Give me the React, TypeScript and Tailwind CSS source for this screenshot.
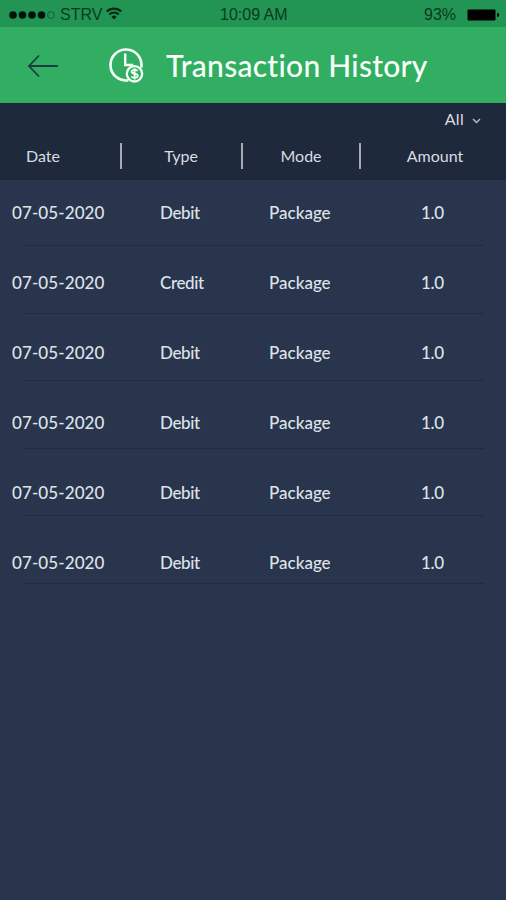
import type { ReactNode } from "react";

interface Transaction {
  date: string;
  type: string;
  mode: string;
  amount: string;
}

const transactions: Transaction[] = [
  { date: "07-05-2020", type: "Debit", mode: "Package", amount: "1.0" },
  { date: "07-05-2020", type: "Credit", mode: "Package", amount: "1.0" },
  { date: "07-05-2020", type: "Debit", mode: "Package", amount: "1.0" },
  { date: "07-05-2020", type: "Debit", mode: "Package", amount: "1.0" },
  { date: "07-05-2020", type: "Debit", mode: "Package", amount: "1.0" },
  { date: "07-05-2020", type: "Debit", mode: "Package", amount: "1.0" },
];

function StatusBar() {
  return (
    <div className="flex h-[27px] items-center bg-[#229453] pt-[2px] font-['Liberation_Sans',sans-serif] text-[16px] text-[#0b3a20]">
      <div className="flex w-[220px] items-center pl-[9px]">
        <svg width="47" height="10" viewBox="0 0 47 10" fill="#02140a">
          <circle cx="4" cy="5" r="3.8" />
          <circle cx="13.5" cy="5" r="3.8" />
          <circle cx="23" cy="5" r="3.8" />
          <circle cx="32.5" cy="5" r="3.8" />
          <circle cx="42" cy="5" r="3.4" fill="none" stroke="#0f6435" />
        </svg>
        <span className="ml-[4px] w-[43px]">STRV</span>
        <svg className="-mt-[2px] ml-[3px]" width="16" height="13" viewBox="0 0 16 13" fill="none" stroke="#052714" strokeWidth="2.1">
          <path d="M0.8 4.6a10.3 10.3 0 0 1 14.4 0" />
          <path d="M3.3 7.4a6.8 6.8 0 0 1 9.4 0" />
          <path d="M8 12.4 5.4 9.8a3.8 3.8 0 0 1 5.2 0z" fill="#052714" stroke="none" />
        </svg>
      </div>
      <span className="w-[204px] whitespace-nowrap pt-px">10:09 AM</span>
      <span className="w-[43px]">93%</span>
      <svg width="34" height="12" viewBox="0 0 34 12" fill="#000">
        <rect x="0.5" y="0.5" width="28" height="11" rx="1" />
        <path d="M30 4c1.4.2 2.2 1 2.2 2s-.8 1.8-2.2 2z" />
      </svg>
    </div>
  );
}

function HistoryIcon() {
  return (
    <svg className="ml-[50px]" width="36" height="38" viewBox="0 0 36 38" fill="none" stroke="#f4fff6">
      <path d="M19.5 34.300A15.500 15.500 0 1 1 32.300 21.500" strokeWidth="2.6" />
      <path d="M16.2 7.500v11.500h8" strokeWidth="2.4" />
      <circle cx="25.5" cy="27.800" r="7.700" strokeWidth="2.3" />
      <path d="M28.600 25c-.6-.8-1.7-1.100-3-1.100-1.800 0-3 .7-3 1.900 0 2.800 6.200 1.100 6.200 4 0 1.200-1.300 2-3.200 2-1.400 0-2.600-.4-3.300-1.300M25.600 22.200v11.200" strokeWidth="1.8" />
    </svg>
  );
}

function Header() {
  return (
    <header className="flex h-[76px] items-center bg-[#32ae63]">
      <svg className="ml-[27px] mt-[2px]" width="32" height="24" viewBox="0 0 32 24" fill="none" stroke="#1d3b43" strokeWidth="1.8">
        <path d="M31 12H2M12 1.500 2 12l10 10.500" />
      </svg>
      <HistoryIcon />
      <h1 className="ml-[21px] whitespace-nowrap text-[30px] font-medium leading-none tracking-[0.27px] text-[#f8fff9]">
        Transaction History
      </h1>
    </header>
  );
}

function HeadCell({ children }: { children: ReactNode }) {
  return <div className="text-center">{children}</div>;
}

function TableHead() {
  return (
    <div className="h-[77px] bg-[#1e293c] text-[16px] text-[#d9dce1]">
      <div className="flex h-[33px] items-center justify-end pr-[25px]">
        <span className="-mt-px tracking-[0.3px]">All</span>
        <svg className="ml-[8px] mt-[2px]" width="9" height="6" viewBox="0 0 9 6" fill="none" stroke="#b9bec8" strokeWidth="1.4">
          <path d="m1 1 3.500 3.500L8 1" />
        </svg>
      </div>
      <div className="grid h-[40px] grid-cols-[86px_68px_54px_67px_52px_66px_84px] items-center">
        <HeadCell>Date</HeadCell>
        <span className="ml-[34px] h-[26px] w-[2px] bg-[#a6abb3]" />
        <HeadCell>Type</HeadCell>
        <span className="ml-[33px] h-[26px] w-[2px] bg-[#a6abb3]" />
        <HeadCell>Mode</HeadCell>
        <span className="ml-[32px] h-[26px] w-[2px] bg-[#a6abb3]" />
        <HeadCell>Amount</HeadCell>
      </div>
    </div>
  );
}

export default function App() {
  return (
    <main className="h-[900px] w-[506px] overflow-hidden bg-[#29354c] font-['Lato','Noto_Sans',sans-serif] [font-variant-ligatures:none]">
      <StatusBar />
      <Header />
      <TableHead />
      {/* separators run on their own pitch, slightly tighter than the rows */}
      <div className="grid">
        <div className="col-start-1 row-start-1 -mt-[1.5px] ml-[23px] mr-[22px]">
          {transactions.map((_, i) => (
            <div key={i} className="h-[67.5px] border-b border-[#202b3f]" />
          ))}
        </div>
        <div className="col-start-1 row-start-1 -mt-[2px] text-[17px] font-medium text-[#dfe3e9]">
          {transactions.map((t, i) => (
            <div key={i} className="grid h-[70px] grid-cols-[148px_109px_152px_97px] items-center">
              <span className="pl-[12px] tracking-[0.1px]">{t.date}</span>
              <span className="pl-[12px] tracking-[-0.4px]">{t.type}</span>
              <span className="pl-[12px]">{t.mode}</span>
              <span className="pl-[12px] tracking-[-0.3px]">{t.amount}</span>
            </div>
          ))}
        </div>
      </div>
    </main>
  );
}
